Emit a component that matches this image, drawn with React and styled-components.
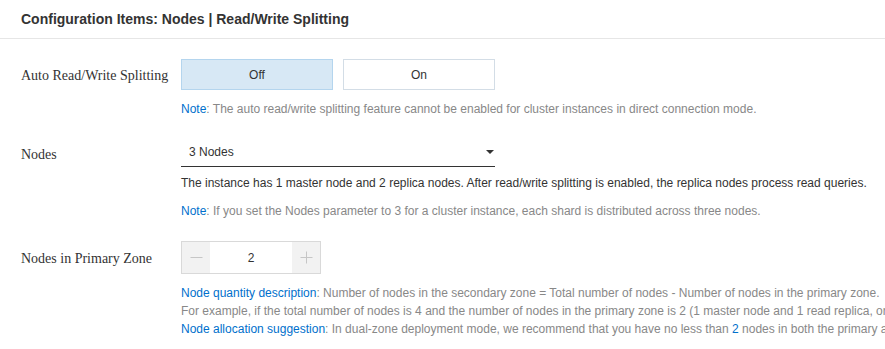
import React from "react";
import styled, { createGlobalStyle } from "styled-components";

const Global = createGlobalStyle`
  html, body { margin: 0; padding: 0; background: #fff; overflow: hidden; }
  body { font-family: "Liberation Sans", Arial, sans-serif; color: #333; }
`;

const Page = styled.div`
  width: 885px;
  overflow: hidden;
`;

const Header = styled.div`
  height: 38px;
  display: flex;
  align-items: center;
  padding: 0 21px;
  border-bottom: 1px solid #e6e6e6;
  font-size: 14px;
  font-weight: bold;
  color: #333;
  box-sizing: content-box;
`;

const Body = styled.div`
  padding: 20px 0 0 21px;
  display: flex;
  flex-direction: column;
  gap: 21px;
`;

const Row = styled.div`
  display: grid;
  grid-template-columns: 160px 1fr;
`;

const Label = styled.div`
  font-family: "Liberation Serif", "Times New Roman", serif;
  font-size: 14px;
  color: #333;
  height: ${(p) => p.$h}px;
  display: flex;
  align-items: center;
  padding-top: 3px;
  box-sizing: border-box;
  white-space: nowrap;
`;

const Field = styled.div`
  display: flex;
  flex-direction: column;
  min-width: 0;
`;

const Segments = styled.div`
  display: flex;
  gap: 10px;
`;

const Segment = styled.button`
  width: 152px;
  height: 31px;
  margin: 0;
  padding: 0;
  font-family: "Liberation Sans", Arial, sans-serif;
  font-size: 12px;
  color: #333;
  background: ${(p) => (p.$active ? "#d7e8f5" : "#fff")};
  border: 1px solid ${(p) => (p.$active ? "#b4d5ee" : "#d3dde6")};
  cursor: pointer;
`;

const Text = styled.div`
  font-size: 12px;
  line-height: 18px;
  color: ${(p) => (p.$dark ? "#333" : "#888")};
  margin-top: ${(p) => p.$mt ?? 0}px;
  white-space: nowrap;
`;

const Blue = styled.span`
  color: #0070cc;
`;

const Select = styled.div`
  width: 314px;
  height: 28px;
  box-sizing: border-box;
  border-bottom: 1px solid #333;
  display: flex;
  align-items: center;
  justify-content: space-between;
  padding: 0 1px 2px 8px;
  font-size: 12px;
  color: #333;
`;

const Caret = styled.span`
  width: 0;
  height: 0;
  border-left: 4px solid transparent;
  border-right: 4px solid transparent;
  border-top: 4px solid #333;
`;

const Stepper = styled.div`
  width: 140px;
  height: 33px;
  box-sizing: border-box;
  border: 1px solid #d9d9d9;
  display: flex;
`;

const StepBtn = styled.div`
  width: 28px;
  background: #f2f2f2;
  display: flex;
  align-items: center;
  justify-content: center;
`;

const StepValue = styled.div`
  flex: 1;
  display: flex;
  align-items: center;
  justify-content: center;
  font-size: 12px;
  color: #333;
  background: #fff;
`;

const Minus = () => (
  <svg width="13" height="13" viewBox="0 0 13 13">
    <path d="M0.5 6.5 H12.5" stroke="#c6c6c6" strokeWidth="1" />
  </svg>
);
const Plus = () => (
  <svg width="13" height="13" viewBox="0 0 13 13">
    <path d="M0.5 6.5 H12.5 M6.5 0.5 V12.5" stroke="#c6c6c6" strokeWidth="1" />
  </svg>
);

export default function App() {
  return (
    <Page>
      <Global />
      <Header>Configuration Items: Nodes | Read/Write Splitting</Header>
      <Body>
        <Row>
          <Label $h={31}>Auto Read/Write Splitting</Label>
          <Field>
            <Segments>
              <Segment $active>Off</Segment>
              <Segment>On</Segment>
            </Segments>
            <Text $mt={10}>
              <Blue>Note</Blue>: The auto read/write splitting feature cannot be enabled for cluster instances in direct connection mode.
            </Text>
          </Field>
        </Row>
        <Row>
          <Label $h={28}>Nodes</Label>
          <Field>
            <Select>
              <span>3 Nodes</span>
              <Caret />
            </Select>
            <Text $dark $mt={7}>
              The instance has 1 master node and 2 replica nodes. After read/write splitting is enabled, the replica nodes process read queries.
            </Text>
            <Text $mt={10}>
              <Blue>Note</Blue>: If you set the Nodes parameter to 3 for a cluster instance, each shard is distributed across three nodes.
            </Text>
          </Field>
        </Row>
        <Row>
          <Label $h={33}>Nodes in Primary Zone</Label>
          <Field>
            <Stepper>
              <StepBtn><Minus /></StepBtn>
              <StepValue>2</StepValue>
              <StepBtn><Plus /></StepBtn>
            </Stepper>
            <Text $mt={10}>
              <Blue>Node quantity description</Blue>: Number of nodes in the secondary zone = Total number of nodes - Number of nodes in the primary zone.
            </Text>
            <Text>
              For example, if the total number of nodes is 4 and the number of nodes in the primary zone is 2 (1 master node and 1 read replica, or 2 read replicas), the number of nodes in the secondary zone is 2.
            </Text>
            <Text>
              <Blue>Node allocation suggestion</Blue>: In dual-zone deployment mode, we recommend that you have no less than <Blue>2</Blue> nodes in both the primary and secondary zones.
            </Text>
          </Field>
        </Row>
      </Body>
    </Page>
  );
}
